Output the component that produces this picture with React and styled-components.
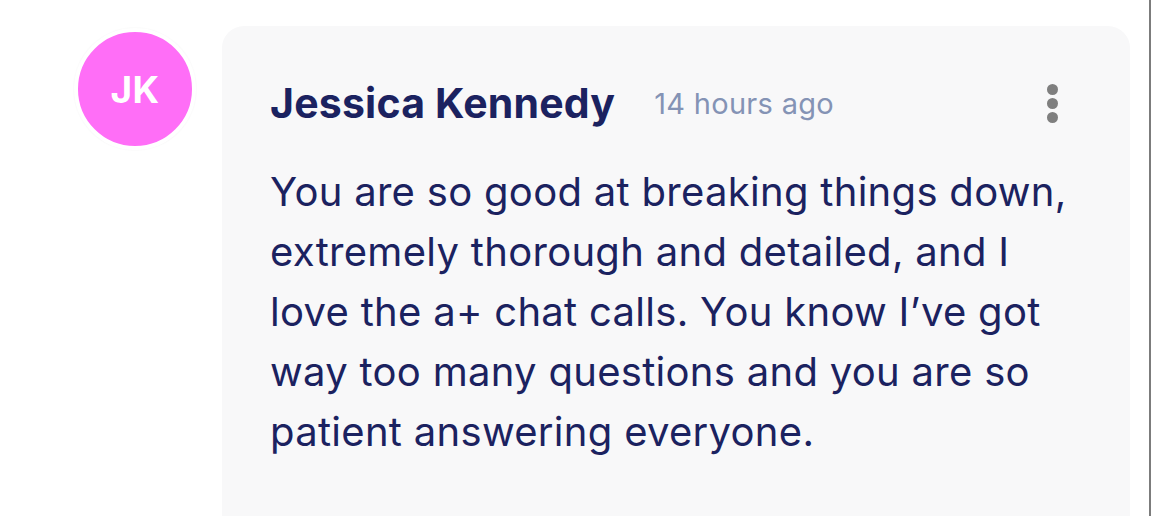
import React from "react";
import styled, { createGlobalStyle } from "styled-components";

const GlobalStyle = createGlobalStyle`
   html, body {
      margin: 0;
      padding: 0;
      background: #ffffff;
   }

   body {
      font-family: Inter, "Noto Sans", "Liberation Sans", sans-serif;
      -webkit-font-smoothing: antialiased;
   }
`;

const Page = styled.div`
   box-sizing: border-box;
   height: 516px;
   overflow: hidden;
   border-right: 2px solid #7c7c7c;
`;

const CommentRow = styled.div`
   display: flex;
   align-items: flex-start;
   gap: 26px;
   padding: 26px 19px 0 74px;
`;

const Avatar = styled.div`
   flex: none;
   display: flex;
   align-items: center;
   justify-content: center;
   width: 114px;
   height: 114px;
   margin-top: 2px;
   border-radius: 50%;
   border: 4px solid #ffffff;
   box-shadow: 0 0 2px rgba(0, 0, 0, 0.06);
   background: ${props => props.color};
   color: #ffffff;
   font-size: 37px;
   font-weight: 700;
   letter-spacing: 0.5px;
`;

const Card = styled.div`
   flex: 1;
   min-height: 560px;
   padding: 52px 48px 0 48px;
   border-radius: 22px;
   background: #f8f8f9;
`;

const CardHeader = styled.div`
   display: flex;
   align-items: center;
   height: 50px;
`;

const Name = styled.span`
   color: #1b2260;
   font-size: 41px;
   line-height: 50px;
   font-weight: 700;
   letter-spacing: 0.2px;
`;

const Timestamp = styled.span`
   margin-left: 39px;
   color: #8493b5;
   font-size: 29px;
   letter-spacing: 0.3px;
`;

const MenuButton = styled.button`
   display: flex;
   flex-direction: column;
   gap: 3px;
   margin-left: auto;
   margin-right: 24px;
   padding: 0;
   border: none;
   background: none;

   span {
      width: 11px;
      height: 11px;
      border-radius: 50%;
      background: #7f7f7f;
   }
`;

const Body = styled.p`
   margin: 34px 0 0;
   max-width: 815px;
   color: #1b2260;
   font-size: 40px;
   line-height: 60px;
   letter-spacing: 0.3px;
`;

const comment = {
   initials: "JK",
   color: "#ff6ef7",
   name: "Jessica Kennedy",
   time: "14 hours ago",
   text: "You are so good at breaking things down, extremely thorough and detailed, and I love the a+ chat calls. You know I\u2019ve got way too many questions and you are so patient answering everyone."
};

export default function App() {
   return (
      <Page>
         <GlobalStyle />
         <CommentRow>
            <Avatar color={comment.color}>{comment.initials}</Avatar>
            <Card>
               <CardHeader>
                  <Name>{comment.name}</Name>
                  <Timestamp>{comment.time}</Timestamp>
                  <MenuButton aria-label="More">
                     <span />
                     <span />
                     <span />
                  </MenuButton>
               </CardHeader>
               <Body>{comment.text}</Body>
            </Card>
         </CommentRow>
      </Page>
   );
}
